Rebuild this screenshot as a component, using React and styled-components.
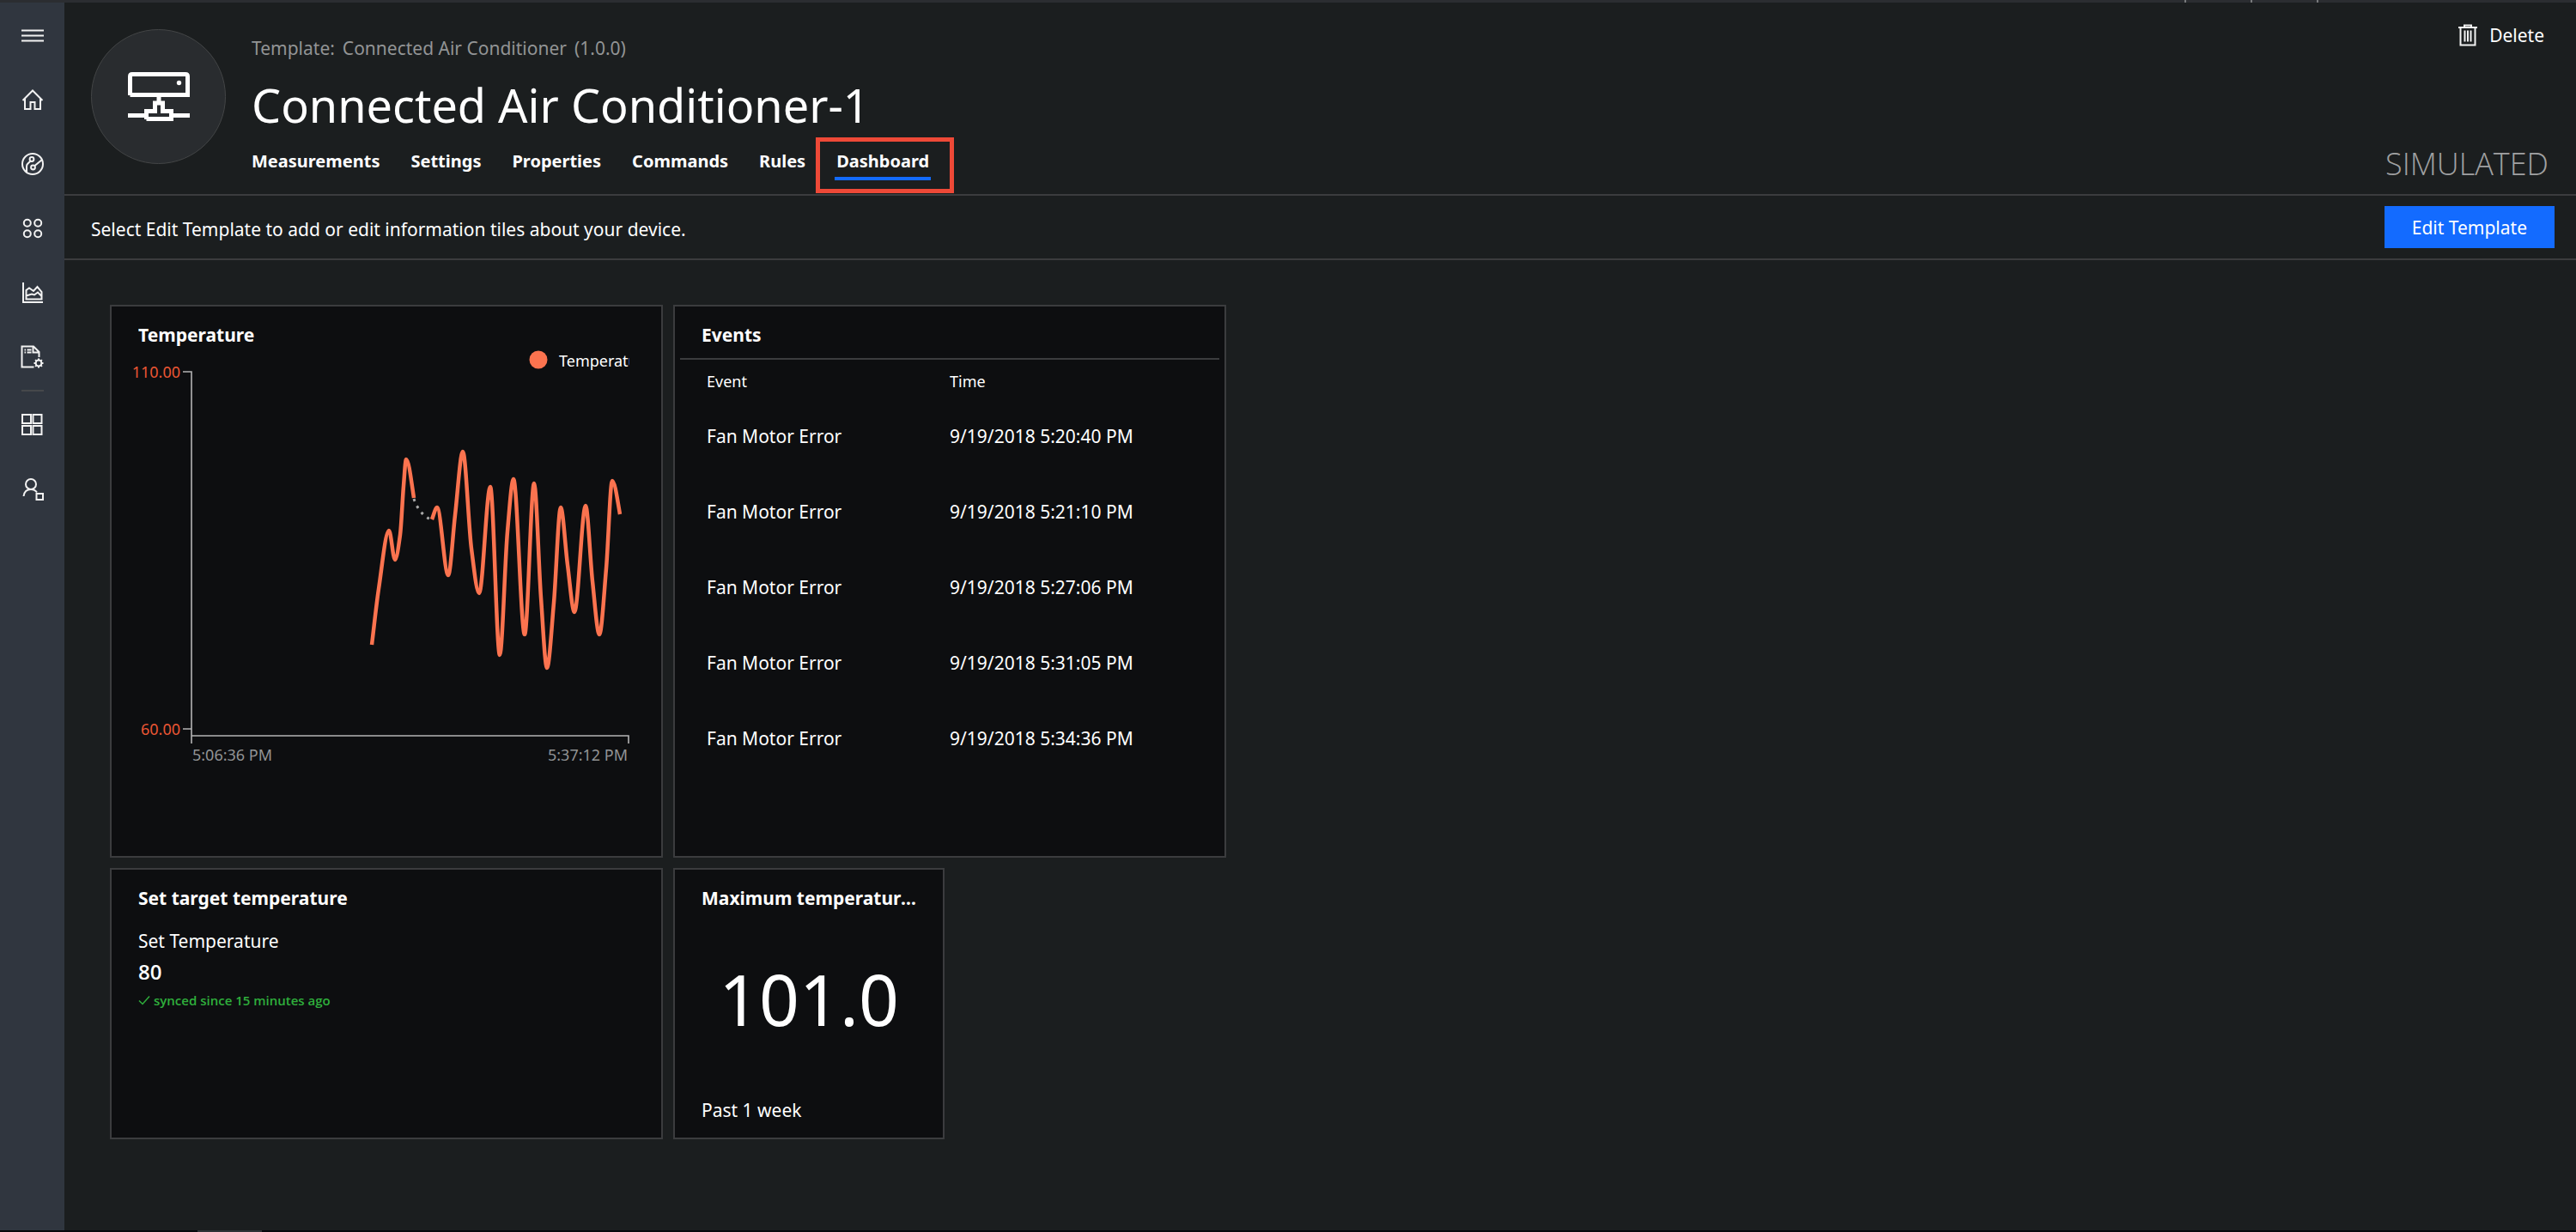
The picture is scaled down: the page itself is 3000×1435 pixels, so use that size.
import React from "react";
import styled, { createGlobalStyle, css } from "styled-components";

const color = {
  page: "#1b1e1f",
  chrome: "#2b2d31",
  rail: "#30363f",
  tile: "#0d0e10",
  line: "#3b3c3e",
  text: "#ffffff",
  muted: "#929495",
  accent: "#136bff",
  series: "#fb734f",
  axisLabel: "#ea5634",
  axis: "#b4b4b4",
  success: "#2fae3c",
  highlight: "#ee4937",
};

const GlobalStyle = createGlobalStyle`
  *, *::before, *::after { box-sizing: border-box; }
  body {
    margin: 0;
    background: ${color.page};
    color: ${color.text};
    font: 400 21px/30px "Noto Sans", "Open Sans", sans-serif;
  }
  button { font: inherit; color: inherit; border: 0; background: none; padding: 0; cursor: pointer; }
  a { color: inherit; text-decoration: none; }
  h1, h2, p { margin: 0; }
`;

const Shell = styled.div`
  display: flex;
  flex-direction: column;
  min-height: 100vh;
`;

const TopEdge = styled.div`
  display: flex;
  justify-content: flex-end;
  gap: 75px;
  height: 3px;
  padding-right: 300px;
  background: ${color.chrome};
`;

const EdgeTick = styled.span`
  width: 2px;
  background: #77797b;
`;

const BottomEdge = styled.div`
  height: 2px;
  padding-left: 230px;
  background: #07090c;
`;

const EdgeTab = styled.div`
  width: 75px;
  height: 2px;
  background: #303236;
`;

const Body = styled.div`
  display: flex;
  flex: 1;
`;

const Rail = styled.nav`
  flex: 0 0 75px;
  display: flex;
  flex-direction: column;
  align-items: center;
  background: ${color.rail};
`;

const RailButton = styled.button`
  display: grid;
  place-items: center;
  width: 100%;
  height: 75px;
`;

const RailDivider = styled.hr`
  width: 26px;
  height: 2px;
  margin: 1px 0;
  border: 0;
  background: #46484b;
`;

const Icon = styled.svg`
  display: block;
  fill: none;
  stroke: #f2f2f2;
  stroke-width: ${(p) => p.$stroke || 2};
`;

const Main = styled.main`
  flex: 1;
  min-width: 0;
`;

const Header = styled.header`
  display: flex;
  gap: 30px;
  height: 225px;
  padding: 0 32px 0 31px;
  border-bottom: 2px solid ${color.line};
`;

const Avatar = styled.div`
  display: grid;
  place-items: center;
  flex: none;
  width: 157px;
  height: 157px;
  margin-top: 31px;
  border: 1px solid #434546;
  border-radius: 50%;
  background: #292c2f;
`;

const Heading = styled.div`
  flex: 1;
  padding-top: 38px;
`;

const TemplateLine = styled.p`
  display: flex;
  gap: 9px;
  color: ${color.muted};
`;

const DeviceName = styled.h1`
  margin: 15px 0;
  font-size: 54px;
  line-height: 72px;
  font-weight: 400;
`;

const Tabs = styled.nav`
  display: flex;
  gap: 32px;
  margin-left: -2px;
`;

const Tab = styled.a`
  position: relative;
  padding: 0 2px 3px;
  border-bottom: 4px solid transparent;
  font-weight: 700;
  font-size: 20px;
  ${(p) =>
    p.$active &&
    css`
      border-color: ${color.accent};
      &::after {
        content: "";
        position: absolute;
        inset: -13px -27px -19px -22px;
        border: 5px solid ${color.highlight};
      }
    `}
`;

const HeaderSide = styled.div`
  display: flex;
  flex-direction: column;
  align-items: flex-end;
  justify-content: space-between;
  padding: 23px 0 11px;
`;

const DeleteButton = styled.button`
  display: flex;
  align-items: center;
  gap: 14px;
  margin-right: 5px;
`;

const Simulated = styled.span`
  font: 300 36px/48px "Open Sans", "Noto Sans", sans-serif;
  color: #a0a1a2;
`;

const Toolbar = styled.div`
  display: flex;
  align-items: center;
  justify-content: space-between;
  height: 75px;
  padding: 0 25px 0 31px;
  border-bottom: 2px solid ${color.line};
`;

const Hint = styled.p`
  padding-top: 4px;
`;

const PrimaryButton = styled.button`
  height: 49px;
  padding: 0 32px;
  background: ${color.accent};
`;

const Board = styled.div`
  display: grid;
  grid-template-columns: repeat(4, 316px);
  grid-auto-rows: 316px;
  gap: 12px;
  padding: 52px 53px;
`;

const Tile = styled.section`
  display: flex;
  flex-direction: column;
  grid-column: span ${(p) => p.$cols || 1};
  grid-row: span ${(p) => p.$rows || 1};
  min-width: 0;
  overflow: hidden;
  border: 2px solid ${color.line};
  background: ${color.tile};
`;

const TileTitle = styled.h2`
  flex: none;
  padding: 18px 0 0;
  margin: 0 22px 0 31px;
  font-size: 21px;
  line-height: 30px;
  font-weight: 700;
  overflow: hidden;
  white-space: nowrap;
  text-overflow: ellipsis;
`;

const Chart = styled.svg`
  display: block;
  flex: none;
  margin-top: -4px;
`;

const ChartText = styled.text`
  font-size: 18px;
  fill: ${(p) => p.$fill};
`;

const TimeAxis = styled.div`
  display: flex;
  justify-content: space-between;
  flex: none;
  padding: 0 39px 0 94px;
  font-size: 18px;
  line-height: 24px;
  color: ${color.muted};
`;

const EventTable = styled.table`
  margin: 12px 6px 0;
  border-top: 2px solid ${color.line};
  border-collapse: collapse;
  table-layout: fixed;
  text-align: left;

  th, td { padding: 0 0 0 31px; }
  th + th, td + td { padding-left: 0; }
  th { height: 46px; padding-top: 4px; font-weight: 400; font-size: 18px; }
  th:first-child { width: 314px; }
  td { height: 88px; }
`;

const TileBody = styled.div`
  display: flex;
  flex-direction: column;
  flex: 1;
  padding: 20px 31px 0;
`;

const SettingValue = styled.strong`
  margin-top: 6px;
  font: 600 24px/30px "Open Sans", "Noto Sans", sans-serif;
`;

const SyncState = styled.span`
  display: flex;
  align-items: center;
  gap: 4px;
  margin-top: 3px;
  font: 600 15px/30px "Open Sans", "Noto Sans", sans-serif;
  color: ${color.success};
`;

const BigNumber = styled.p`
  flex: 1;
  padding-top: 45px;
  font-size: 82px;
  line-height: 114px;
  text-align: center;
`;

const Period = styled.p`
  padding: 0 31px 17px;
`;

const readings = [
  [
    [303, 350], [311, 285], [323, 217], [330, 251], [336, 222], [340, 165],
    [343, 134], [352, 179],
  ],
  [
    [373, 204], [379, 190], [392, 269], [400, 199], [409, 125], [419, 238],
    [428, 290], [441, 166], [452, 362], [461, 218], [468, 157], [481, 338],
    [492, 162], [500, 295], [507, 377], [515, 301], [523, 190], [531, 257],
    [539, 312], [552, 188], [560, 276], [568, 338], [576, 261], [583, 159],
    [592, 198],
  ],
];

// Monotone cubic spline: flat at every peak and trough.
function smoothPath(points) {
  const n = points.length;
  const slope = points
    .slice(1)
    .map((p, i) => (p[1] - points[i][1]) / (p[0] - points[i][0]));
  const tangent = points.map((_, i) => {
    if (i === 0) return slope[0];
    if (i === n - 1) return slope[n - 2] * 1.3;
    const a = slope[i - 1];
    const b = slope[i];
    return a * b <= 0 ? 0 : (2 * a * b) / (a + b);
  });
  let d = `M${points[0][0]},${points[0][1]}`;
  for (let i = 0; i < n - 1; i++) {
    const [x0, y0] = points[i];
    const [x1, y1] = points[i + 1];
    const h = (x1 - x0) / 3;
    d += `C${x0 + h},${y0 + tangent[i] * h},${x1 - h},${y1 - tangent[i + 1] * h},${x1},${y1}`;
  }
  return d;
}

function TemperatureChart() {
  return (
    <Chart width="603" height="466" role="img" aria-label="Temperature over time">
      <circle cx="497" cy="18" r="10.5" fill={color.series} />
      <ChartText x="521" y="26" $fill={color.text}>Temperature</ChartText>
      <ChartText x="80" y="39" textAnchor="end" $fill={color.axisLabel}>110.00</ChartText>
      <ChartText x="80" y="455" textAnchor="end" $fill={color.axisLabel}>60.00</ChartText>
      <path
        d="M83 32H93V465M83 448H93M93 456H602V465"
        fill="none"
        stroke={color.axis}
        strokeWidth="1.6"
      />
      {readings.map((run) => (
        <path key={run[0][0]} d={smoothPath(run)} fill="none" stroke={color.series} strokeWidth="4.5" />
      ))}
      <path
        d="M352 180Q358 198 373 205"
        fill="none"
        stroke="#a9a9a9"
        strokeWidth="3"
        strokeDasharray="3 6"
      />
    </Chart>
  );
}

const events = [
  "9/19/2018 5:20:40 PM",
  "9/19/2018 5:21:10 PM",
  "9/19/2018 5:27:06 PM",
  "9/19/2018 5:31:05 PM",
  "9/19/2018 5:34:36 PM",
];

const railTop = [
  {
    label: "Menu",
    art: <path d="M1 8.500H27M1 14.500H27M1 20.500H27" />,
  },
  {
    label: "Home",
    art: <path d="M2.500 15L14 3.500L25.500 15M5 13V25H11.500V17H16.500V25H23V13" />,
  },
  {
    label: "Explorer",
    art: (
      <>
        <circle cx="14" cy="14" r="12" />
        <circle cx="13" cy="8.500" r="2.400" />
        <circle cx="14.500" cy="18" r="2.400" />
        <path d="M11.500 10.500L8 14Q7 15 7 17V23.500M16.500 16L25 9" />
      </>
    ),
  },
  {
    label: "Device sets",
    art: (
      <>
        <circle cx="7.800" cy="7.800" r="4" />
        <circle cx="20.200" cy="7.800" r="4" />
        <circle cx="7.800" cy="20.200" r="4" />
        <circle cx="20.200" cy="20.200" r="4" />
      </>
    ),
  },
  {
    label: "Analytics",
    art: (
      <path d="M3 2V25H26M6.500 21.500V11L10 8.500L15 12L19.500 7L24.500 13V21.500ZM6.500 17.500L13 15.500L16 16.500L20 13.500L24.500 18" />
    ),
  },
  {
    label: "Jobs",
    art: (
      <>
        <path d="M15.500 25.500H1.500V1.500H15L21.500 8V14M14.500 2V8.500H21.500M4.500 5.500H6M7.500 5.500H12.500M4.500 8.500H6M7.500 8.500H12.500" />
        <circle cx="21" cy="21" r="3.400" />
        <path d="M21 15.500V17.500M21 24.500V26.500M15.500 21H17.500M24.500 21H26.500M17.100 17.100L18.600 18.600M23.400 23.400L24.900 24.900M17.100 24.900L18.600 23.400M23.400 18.600L24.900 17.100" />
      </>
    ),
  },
];

const railBottom = [
  {
    label: "Device templates",
    art: <path d="M2 2H12V12H2ZM14.500 2H24.500V12H14.500ZM2 15H12V25H2ZM14.500 15H24.500V25H14.500Z" />,
  },
  {
    label: "Administration",
    art: (
      <>
        <circle cx="12" cy="8" r="6" />
        <path d="M3.500 22Q4.500 14 12 14Q16.500 14 19 17.500M18.500 19H26V26H18.500Z" />
      </>
    ),
  },
];

function RailItem({ label, art }) {
  return (
    <RailButton aria-label={label}>
      <Icon width="28" height="28" viewBox="0 0 28 28">{art}</Icon>
    </RailButton>
  );
}

const tabs = ["Measurements", "Settings", "Properties", "Commands", "Rules", "Dashboard"];

export default function App() {
  return (
    <Shell>
      <GlobalStyle />
      <TopEdge>
        <EdgeTick />
        <EdgeTick />
        <EdgeTick />
      </TopEdge>
      <Body>
        <Rail aria-label="Primary">
          {railTop.map((item) => <RailItem key={item.label} {...item} />)}
          <RailDivider />
          {railBottom.map((item) => <RailItem key={item.label} {...item} />)}
        </Rail>
        <Main>
          <Header>
            <Avatar>
              <Icon width="72" height="58" viewBox="0 0 72 58" $stroke={5}>
                <path d="M2.500 27V5Q2.500 2.500 5 2.500H67Q69.500 2.500 69.500 5V26.500H2.500ZM36 27V36M0 50.500H21M51 50.500H72M21.500 55V45.500H31.500V36H40.500V45.500H50.500V54.500H21.500" stroke="#fff" />
                <circle cx="59.500" cy="12.500" r="2.700" fill="#fff" stroke="none" />
              </Icon>
            </Avatar>
            <Heading>
              <TemplateLine>
                <span>Template:</span>
                <span>Connected Air Conditioner</span>
                <span>(1.0.0)</span>
              </TemplateLine>
              <DeviceName>Connected Air Conditioner-1</DeviceName>
              <Tabs aria-label="Device">
                {tabs.map((name) => (
                  <Tab key={name} href={`#${name.toLowerCase()}`} $active={name === "Dashboard"}>
                    {name}
                  </Tab>
                ))}
              </Tabs>
            </Heading>
            <HeaderSide>
              <DeleteButton>
                <Icon width="22" height="26" viewBox="0 0 22 26">
                  <path d="M0 4H22M7 4V1.500H15V4M2.500 4V24.500H19.500V4" />
                  <path d="M7.500 7.500V20.500M11 7.500V20.500M14.500 7.500V20.500" />
                </Icon>
                Delete
              </DeleteButton>
              <Simulated>SIMULATED</Simulated>
            </HeaderSide>
          </Header>
          <Toolbar>
            <Hint>Select Edit Template to add or edit information tiles about your device.</Hint>
            <PrimaryButton>Edit Template</PrimaryButton>
          </Toolbar>
          <Board>
            <Tile $cols={2} $rows={2}>
              <TileTitle>Temperature</TileTitle>
              <TemperatureChart />
              <TimeAxis>
                <span>5:06:36 PM</span>
                <span>5:37:12 PM</span>
              </TimeAxis>
            </Tile>
            <Tile $cols={2} $rows={2}>
              <TileTitle>Events</TileTitle>
              <EventTable>
                <thead>
                  <tr>
                    <th scope="col">Event</th>
                    <th scope="col">Time</th>
                  </tr>
                </thead>
                <tbody>
                  {events.map((time) => (
                    <tr key={time}>
                      <td>Fan Motor Error</td>
                      <td>{time}</td>
                    </tr>
                  ))}
                </tbody>
              </EventTable>
            </Tile>
            <Tile $cols={2}>
              <TileTitle>Set target temperature</TileTitle>
              <TileBody>
                <span>Set Temperature</span>
                <SettingValue>80</SettingValue>
                <SyncState>
                  <Icon width="14" height="12" viewBox="0 0 14 12" $stroke={1.5}>
                    <path d="M1 6.500L5 10.500L13 1.500" stroke={color.success} />
                  </Icon>
                  synced since 15 minutes ago
                </SyncState>
              </TileBody>
            </Tile>
            <Tile>
              <TileTitle>Maximum temperature (°F)</TileTitle>
              <BigNumber>101.0</BigNumber>
              <Period>Past 1 week</Period>
            </Tile>
          </Board>
        </Main>
      </Body>
      <BottomEdge>
        <EdgeTab />
      </BottomEdge>
    </Shell>
  );
}
